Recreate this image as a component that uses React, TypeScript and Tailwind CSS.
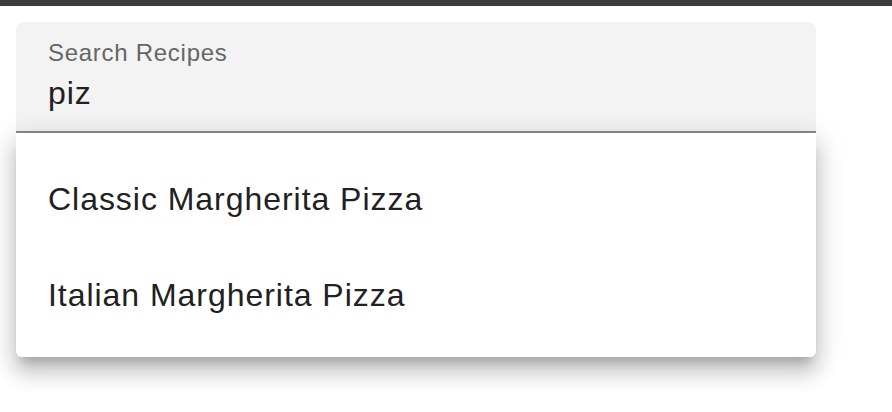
export default function App() {
  const items = ["Classic Margherita Pizza", "Italian Margherita Pizza"];
  return (
    <div className="min-h-[412px] w-full bg-white" style={{ fontFamily: '"Liberation Sans", Arial, sans-serif' }}>
      <div className="h-[6px] bg-[#3d3d3d]" />
      <div className="ml-4 mt-4 w-[800px]">
        <div className="relative rounded-t-[8px] border-b-2 border-[#8a8a8a] bg-[#f3f3f3] pl-[32px] pr-6 pt-[19px] pb-[22px]">
          <div className="text-[24px] leading-[24px] tracking-[0.03em] text-[#666666]">Search Recipes</div>
          <div className="mt-3 text-[32px] leading-[32px] tracking-[0.03em] text-[#212121]">piz</div>
        </div>
        <div className="relative z-10 rounded-b-[6px] bg-white py-4 shadow-[0_10px_10px_-6px_rgba(0,0,0,0.2),0_16px_20px_2px_rgba(0,0,0,0.14),0_6px_28px_4px_rgba(0,0,0,0.12)]">
          {items.map((t) => (
            <div key={t} className="flex h-[96px] items-center pl-[32px] pt-[4px] text-[32px] leading-[32px] tracking-[0.03em] text-[#212121]">
              {t}
            </div>
          ))}
        </div>
      </div>
    </div>
  );
}
